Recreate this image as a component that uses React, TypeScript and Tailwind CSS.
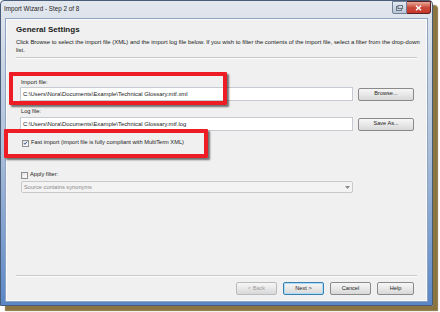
import React from "react";

function WinButton({ label, primary, disabled, w }: { label: string; primary?: boolean; disabled?: boolean; w: string }) {
  return (
    <button
      className={`${w} h-[13px] shrink-0 rounded-[2px] border bg-gradient-to-b from-[#f6f6f6] via-[#e8e8e8] to-[#d8d8d8] text-[5.6px] leading-none ${
        primary
          ? "border-[#3c7fb1] text-[#222] shadow-[inset_0_0_0_1px_#a8dcf8]"
          : disabled
          ? "border-[#b8bcbf] text-[#a0a0a0]"
          : "border-[#8a8a8a] text-[#222]"
      }`}
    >
      {label}
    </button>
  );
}

function Check({ checked }: { checked?: boolean }) {
  return (
    <span className="flex h-[7px] w-[7px] shrink-0 items-center justify-center border border-[#8f8f8f] bg-gradient-to-br from-[#e2e2e2] to-white">
      {checked && (
        <svg width="6" height="6" viewBox="0 0 6 6">
          <path d="M1 3 L2.4 4.6 L5 1.2" stroke="#2a4a8a" strokeWidth="1.1" fill="none" />
        </svg>
      )}
    </span>
  );
}

export default function App() {
  return (
    <div className="relative h-[312px] w-[440px] overflow-hidden bg-white" style={{ fontFamily: '"Liberation Sans", Arial, sans-serif' }}>
      {/* window */}
      <div className="relative flex h-[306px] w-[433px] flex-col rounded-t-[4px] border border-[#4a5d78] bg-gradient-to-b from-[#e3e8ee] via-[#aabdd8] to-[#5a86c6] shadow-[5px_5px_1px_#8a7440]">
        {/* title bar */}
        <div className="flex h-[17px] shrink-0 items-start">
          <span className="ml-[3px] mt-[5px] text-[6.3px] leading-none text-[#1e1e1e]">Import Wizard - Step 2 of 8</span>
          <div className="ml-auto mr-[1px] flex">
            <span className="flex h-[13px] w-[15px] items-center justify-center rounded-bl-[2px] border border-[#6e7f96] bg-gradient-to-b from-[#e4eaf2] to-[#b9c6d6]">
              <svg width="7" height="6" viewBox="0 0 7 6">
                <rect x="0.5" y="1.5" width="5" height="4" fill="none" stroke="#6b7685" />
                <rect x="2" y="0.5" width="4.5" height="3" fill="#cfd7e2" stroke="#6b7685" />
              </svg>
            </span>
            <span className="flex h-[13px] w-[24px] items-center justify-center rounded-br-[3px] border border-l-0 border-[#5a2020] bg-gradient-to-b from-[#e9a99c] via-[#c94a3a] to-[#c8352a]">
              <svg width="7" height="6" viewBox="0 0 7 6">
                <path d="M1 0.8 L6 5.2 M6 0.8 L1 5.2" stroke="white" strokeWidth="1.5" />
              </svg>
            </span>
          </div>
        </div>

        {/* content panel */}
        <div className="mx-[4px] mb-[3px] flex flex-1 flex-col border border-[#8ea4c2] bg-[#f0f0f0] text-[#1a1a1a] shadow-[inset_0_0_0_1px_#fafafa]">
          <div className="px-[10px] pt-[6px]">
            <div className="text-[8px] font-bold leading-[10px]">General Settings</div>
            <div className="mt-[3px] whitespace-nowrap text-[5.9px] leading-[8px]">
              Click Browse to select the import file (XML) and the import log file below. If you wish to filter the contents of the import file, select a filter from the drop-down
            </div>
            <div className="text-[5.9px] leading-[8px]">list.</div>
          </div>
          <div className="mx-[10px] mt-[3px] h-[2px] border-t border-[#c8c8c8] bg-white/80" />

          <div className="flex flex-col pl-[14px] pr-[4px]">
            <div className="ml-[1px] mt-[19px] text-[5.7px] leading-[8px]">Import file:</div>
            <div className="mt-[1px] flex items-center gap-[5px]">
              <div className="flex h-[14px] w-[333px] items-center border border-[#c6cbd1] bg-white px-[2px] text-[5.9px]">
                C:\Users\Nora\Documents\Example\Technical Glossary.mtf.xml
              </div>
              <WinButton label="Browse..." w="w-[56px]" />
            </div>
            <div className="ml-[1px] mt-[6px] text-[5.7px] leading-[8px]">Log file:</div>
            <div className="mt-[2px] flex items-center gap-[5px]">
              <div className="flex h-[14px] w-[333px] items-center border border-[#c6cbd1] bg-white px-[2px] text-[5.9px]">
                C:\Users\Nora\Documents\Example\Technical Glossary.mtf.log
              </div>
              <WinButton label="Save As..." w="w-[56px]" />
            </div>
            <div className="mt-[8px] flex h-[8px] items-center gap-[2px] pl-[2px]">
              <Check checked />
              <span className="text-[5.7px] leading-none">Fast import (import file is fully compliant with MultiTerm XML)</span>
            </div>

            <div className="mt-[24px] flex h-[8px] items-center gap-[2px] pl-[1px]">
              <Check />
              <span className="text-[5.7px] leading-none">Apply filter:</span>
            </div>
            <div className="ml-[1px] mt-[2px] flex h-[12px] w-[332px] items-center justify-between rounded-[2px] border border-[#c9c9c9] bg-[#f3f3f3] px-[2px] text-[5.7px] text-[#8a8a8a]">
              <span>Source contains synonyms</span>
              <svg width="5" height="3" viewBox="0 0 5 3">
                <path d="M0 0 L5 0 L2.5 3 Z" fill="#8a8a8a" />
              </svg>
            </div>
          </div>

          <div className="flex-1" />
          <div className="mx-[10px] h-[2px] border-t border-[#c8c8c8] bg-white/80" />
          <div className="mb-[6px] mt-[5px] flex justify-end gap-[6px] pr-[13px]">
            <WinButton label="< Back" disabled w="w-[41px]" />
            <WinButton label="Next >" primary w="w-[41px]" />
            <WinButton label="Cancel" w="w-[41px]" />
            <WinButton label="Help" w="w-[37px]" />
          </div>
        </div>
      </div>

      {/* red annotation boxes */}
      <div className="absolute left-[9px] top-[72px] h-[33px] w-[218px] rounded-[1px] border-[4px] border-[#ee1c24] shadow-[2px_2px_2px_rgba(0,0,0,0.55)]" />
      <div className="absolute left-[4px] top-[129px] h-[29px] w-[204px] rounded-[1px] border-[4px] border-[#ee1c24] shadow-[2px_2px_2px_rgba(0,0,0,0.55)]" />
    </div>
  );
}
